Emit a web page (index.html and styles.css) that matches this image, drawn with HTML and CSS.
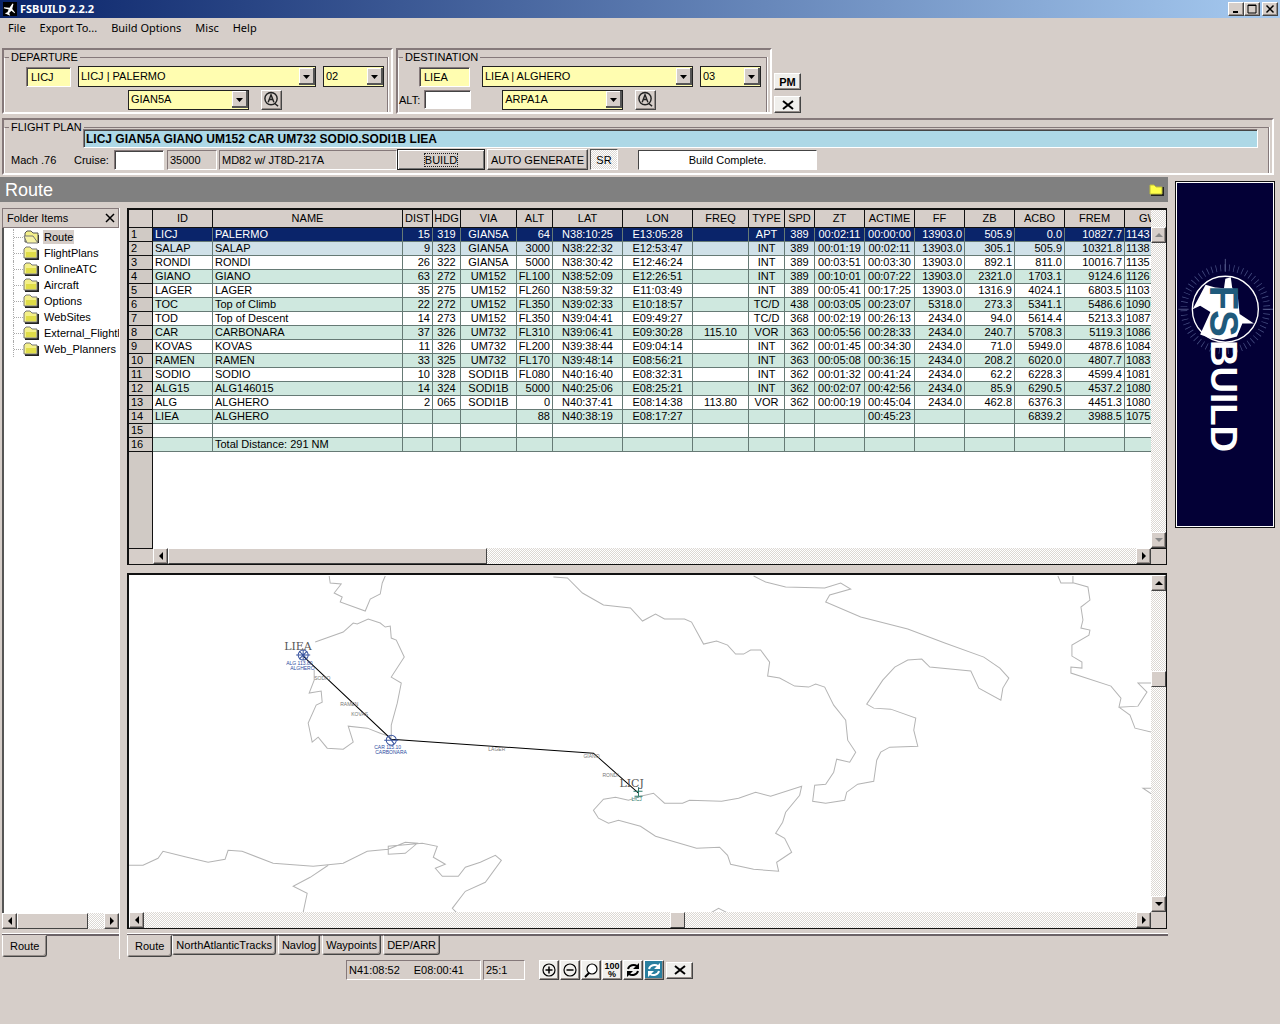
FILE: index.html
```
<!DOCTYPE html>
<html lang="en">
<head>
  <meta charset="UTF-8">
  <meta name="viewport" content="width=device-width, initial-scale=1.0">
  <title>FSBUILD 2.2.2</title>
  <link rel="stylesheet" href="styles.css">
</head>
<body>
  <!-- Window caption -->
  <header class="caption">
    <svg class="caption-icon" viewBox="0 0 14 14" aria-hidden="true">
      <rect width="14" height="14" fill="#000"/>
      <path d="M1 8l5-2 1-5 1 0 1 5 4 2v1l-4-1-1 3 2 2H4l2-2V8l-5 1z" fill="#fff" transform="rotate(25 7 7)"/>
    </svg>
    <h1>FSBUILD 2.2.2</h1>
    <div class="caption-buttons">
      <button aria-label="Minimize"><svg viewBox="0 0 12 10"><path d="M3 8h5" stroke="#000" stroke-width="2"/></svg></button>
      <button aria-label="Maximize"><svg viewBox="0 0 12 10"><path d="M2 1h8v8H2z" fill="none" stroke="#000"/><path d="M2 1.500h8" stroke="#000"/></svg></button>
      <button class="close" aria-label="Close"><svg viewBox="0 0 12 10"><path d="M2.500 1.500l7 7m0-7l-7 7" stroke="#000" stroke-width="1.500"/></svg></button>
    </div>
  </header>

  <nav class="menu">
    <button>File</button>
    <button>Export To...</button>
    <button>Build Options</button>
    <button>Misc</button>
    <button>Help</button>
  </nav>

  <!-- Airports -->
  <section class="airports">
    <div class="group departure">
      <fieldset>
        <legend>DEPARTURE</legend>
        <div class="line">
          <input class="icao" type="text" value="LICJ" aria-label="Departure ICAO">
          <select class="airport" aria-label="Departure airport"><option>LICJ | PALERMO</option></select>
          <select class="runway" aria-label="Departure runway"><option>02</option></select>
        </div>
        <div class="line second">
          <select class="procedure" aria-label="SID"><option>GIAN5A</option></select>
          <button class="lookup" aria-label="Find departure">
            <svg viewBox="0 0 18 18"><circle cx="8.500" cy="8" r="6.500" fill="none" stroke="#222" stroke-width="1.500"/><path d="M5.500 12l3-8 3 8M7 9h3M12 13l4 3" fill="none" stroke="#222" stroke-width="1.500"/></svg>
          </button>
        </div>
      </fieldset>
    </div>

    <div class="group destination">
      <fieldset>
        <legend>DESTINATION</legend>
        <div class="line">
          <input class="icao" type="text" value="LIEA" aria-label="Destination ICAO">
          <select class="airport" aria-label="Destination airport"><option>LIEA | ALGHERO</option></select>
          <select class="runway" aria-label="Destination runway"><option>03</option></select>
        </div>
        <div class="line second">
          <label for="alternate">ALT:</label>
          <input class="alternate" type="text" id="alternate">
          <select class="procedure" aria-label="STAR"><option>ARPA1A</option></select>
          <button class="lookup" aria-label="Find destination">
            <svg viewBox="0 0 18 18"><circle cx="8.500" cy="8" r="6.500" fill="none" stroke="#222" stroke-width="1.500"/><path d="M5.500 12l3-8 3 8M7 9h3M12 13l4 3" fill="none" stroke="#222" stroke-width="1.500"/></svg>
          </button>
        </div>
      </fieldset>
    </div>

    <div class="side-buttons">
      <button class="small-button">PM</button>
      <button class="small-button" aria-label="Clear airports"><svg viewBox="0 0 14 10"><path d="M2 1l10 8m0-8L2 9" stroke="#000" stroke-width="2"/></svg></button>
    </div>
  </section>

  <!-- Flight plan -->
  <section class="group plan">
    <fieldset>
      <legend>FLIGHT PLAN</legend>
      <input class="route-text" type="text" value="LICJ GIAN5A GIANO UM152 CAR UM732 SODIO.SODI1B LIEA" aria-label="Route">
      <div class="plan-line">
        <span class="mach">Mach .76</span>
        <label for="cruise">Cruise:</label>
        <input class="cruise" type="text" id="cruise">
        <output class="sunken level">35000</output>
        <output class="sunken aircraft">MD82 w/ JT8D-217A</output>
        <button class="build"><span>BUILD</span></button>
        <button class="generate">AUTO GENERATE</button>
        <button class="sr" aria-pressed="true">SR</button>
        <output class="status">Build Complete.</output>
      </div>
    </fieldset>
  </section>

  <main>
    <div class="workspace">
      <div class="section-title">
        <h2>Route</h2>
        <button class="folder-button" aria-label="Open folder"><svg viewBox="0 0 16 13"><path d="M3 12h12V4" fill="none" stroke="#222" stroke-width="2"/><path d="M2 2h4l2 2h6v7H2z" fill="#ffff4a" stroke="#bdbd3a"/></svg></button>
      </div>

      <div class="panes">
        <!-- Folder tree -->
        <aside class="folders">
          <div class="folders-head">
            <span>Folder Items</span>
            <button aria-label="Close folders"><svg viewBox="0 0 10 10"><path d="M1 1l8 8m0-8L1 9" stroke="#000" stroke-width="1.500"/></svg></button>
          </div>
          <svg width="0" height="0" class="defs" aria-hidden="true">
            <symbol id="folder" viewBox="0 0 16 14">
              <path d="M15 4v9H2" fill="none" stroke="#222" stroke-width="2"/>
              <path d="M1 12V3l2-2h4l2 2h5v9z" fill="#f4f08a" stroke="#777"/>
              <path d="M3 6h10v5H3z" fill="#e0dd48"/>
            </symbol>
            <symbol id="folder-open" viewBox="0 0 16 14">
              <path d="M15 5v8" stroke="#222" stroke-width="2"/>
              <path d="M2 12V3l2-2h4l2 2h5v9z" fill="#f4f08a" stroke="#555"/>
              <path d="M1 6h9l5 7H4z" fill="#f6f3a4" stroke="#777"/>
            </symbol>
          </svg>
          <ul class="tree">
            <li class="selected"><svg><use href="#folder-open"/></svg><a href="#">Route</a></li>
            <li><svg><use href="#folder"/></svg><a href="#">FlightPlans</a></li>
            <li><svg><use href="#folder"/></svg><a href="#">OnlineATC</a></li>
            <li><svg><use href="#folder"/></svg><a href="#">Aircraft</a></li>
            <li><svg><use href="#folder"/></svg><a href="#">Options</a></li>
            <li><svg><use href="#folder"/></svg><a href="#">WebSites</a></li>
            <li><svg><use href="#folder"/></svg><a href="#">External_FlightP</a></li>
            <li><svg><use href="#folder"/></svg><a href="#">Web_Planners</a></li>
          </ul>
          <div class="scroll-x">
            <button aria-label="Scroll left" class="left"></button>
            <div class="track"><div class="thumb wide"></div></div>
            <button aria-label="Scroll right" class="right"></button>
          </div>
          <div class="tabs folder-tabs"><button class="active">Route</button></div>
        </aside>

        <div class="content">
          <!-- Route table -->
          <div class="grid-frame">
            <div class="grid-main">
              <div class="grid-view">
                <table>
                  <colgroup>
                    <col class="w24"><col class="w60"><col class="w190"><col class="w30"><col class="w28"><col class="w56">
                    <col class="w36"><col class="w70"><col class="w70"><col class="w56"><col class="w36"><col class="w30">
                    <col class="w50"><col class="w50"><col class="w50"><col class="w50"><col class="w50"><col class="w60"><col class="w60">
                  </colgroup>
                  <thead>
                    <tr><th></th><th>ID</th><th>NAME</th><th>DIST</th><th>HDG</th><th>VIA</th><th>ALT</th><th>LAT</th><th>LON</th><th>FREQ</th><th>TYPE</th><th>SPD</th><th>ZT</th><th>ACTIME</th><th>FF</th><th>ZB</th><th>ACBO</th><th>FREM</th><th class="weight">GW</th></tr>
                  </thead>
                  <tbody>
                    <tr class="current"><th>1</th><td>LICJ</td><td>PALERMO</td><td>15</td><td>319</td><td>GIAN5A</td><td>64</td><td>N38:10:25</td><td>E13:05:28</td><td></td><td>APT</td><td>389</td><td>00:02:11</td><td>00:00:00</td><td>13903.0</td><td>505.9</td><td>0.0</td><td>10827.7</td><td>1143</td></tr>
                    <tr class="next"><th>2</th><td>SALAP</td><td>SALAP</td><td>9</td><td>323</td><td>GIAN5A</td><td>3000</td><td>N38:22:32</td><td>E12:53:47</td><td></td><td>INT</td><td>389</td><td>00:01:19</td><td>00:02:11</td><td>13903.0</td><td>305.1</td><td>505.9</td><td>10321.8</td><td>1138</td></tr>
                    <tr><th>3</th><td>RONDI</td><td>RONDI</td><td>26</td><td>322</td><td>GIAN5A</td><td>5000</td><td>N38:30:42</td><td>E12:46:24</td><td></td><td>INT</td><td>389</td><td>00:03:51</td><td>00:03:30</td><td>13903.0</td><td>892.1</td><td>811.0</td><td>10016.7</td><td>1135</td></tr>
                    <tr><th>4</th><td>GIANO</td><td>GIANO</td><td>63</td><td>272</td><td>UM152</td><td>FL100</td><td>N38:52:09</td><td>E12:26:51</td><td></td><td>INT</td><td>389</td><td>00:10:01</td><td>00:07:22</td><td>13903.0</td><td>2321.0</td><td>1703.1</td><td>9124.6</td><td>1126</td></tr>
                    <tr><th>5</th><td>LAGER</td><td>LAGER</td><td>35</td><td>275</td><td>UM152</td><td>FL260</td><td>N38:59:32</td><td>E11:03:49</td><td></td><td>INT</td><td>389</td><td>00:05:41</td><td>00:17:25</td><td>13903.0</td><td>1316.9</td><td>4024.1</td><td>6803.5</td><td>1103</td></tr>
                    <tr><th>6</th><td>TOC</td><td>Top of Climb</td><td>22</td><td>272</td><td>UM152</td><td>FL350</td><td>N39:02:33</td><td>E10:18:57</td><td></td><td>TC/D</td><td>438</td><td>00:03:05</td><td>00:23:07</td><td>5318.0</td><td>273.3</td><td>5341.1</td><td>5486.6</td><td>1090</td></tr>
                    <tr><th>7</th><td>TOD</td><td>Top of Descent</td><td>14</td><td>273</td><td>UM152</td><td>FL350</td><td>N39:04:41</td><td>E09:49:27</td><td></td><td>TC/D</td><td>368</td><td>00:02:19</td><td>00:26:13</td><td>2434.0</td><td>94.0</td><td>5614.4</td><td>5213.3</td><td>1087</td></tr>
                    <tr><th>8</th><td>CAR</td><td>CARBONARA</td><td>37</td><td>326</td><td>UM732</td><td>FL310</td><td>N39:06:41</td><td>E09:30:28</td><td>115.10</td><td>VOR</td><td>363</td><td>00:05:56</td><td>00:28:33</td><td>2434.0</td><td>240.7</td><td>5708.3</td><td>5119.3</td><td>1086</td></tr>
                    <tr><th>9</th><td>KOVAS</td><td>KOVAS</td><td>11</td><td>326</td><td>UM732</td><td>FL200</td><td>N39:38:44</td><td>E09:04:14</td><td></td><td>INT</td><td>362</td><td>00:01:45</td><td>00:34:30</td><td>2434.0</td><td>71.0</td><td>5949.0</td><td>4878.6</td><td>1084</td></tr>
                    <tr><th>10</th><td>RAMEN</td><td>RAMEN</td><td>33</td><td>325</td><td>UM732</td><td>FL170</td><td>N39:48:14</td><td>E08:56:21</td><td></td><td>INT</td><td>363</td><td>00:05:08</td><td>00:36:15</td><td>2434.0</td><td>208.2</td><td>6020.0</td><td>4807.7</td><td>1083</td></tr>
                    <tr><th>11</th><td>SODIO</td><td>SODIO</td><td>10</td><td>328</td><td>SODI1B</td><td>FL080</td><td>N40:16:40</td><td>E08:32:31</td><td></td><td>INT</td><td>362</td><td>00:01:32</td><td>00:41:24</td><td>2434.0</td><td>62.2</td><td>6228.3</td><td>4599.4</td><td>1081</td></tr>
                    <tr><th>12</th><td>ALG15</td><td>ALG146015</td><td>14</td><td>324</td><td>SODI1B</td><td>5000</td><td>N40:25:06</td><td>E08:25:21</td><td></td><td>INT</td><td>362</td><td>00:02:07</td><td>00:42:56</td><td>2434.0</td><td>85.9</td><td>6290.5</td><td>4537.2</td><td>1080</td></tr>
                    <tr><th>13</th><td>ALG</td><td>ALGHERO</td><td>2</td><td>065</td><td>SODI1B</td><td>0</td><td>N40:37:41</td><td>E08:14:38</td><td>113.80</td><td>VOR</td><td>362</td><td>00:00:19</td><td>00:45:04</td><td>2434.0</td><td>462.8</td><td>6376.3</td><td>4451.3</td><td>1080</td></tr>
                    <tr><th>14</th><td>LIEA</td><td>ALGHERO</td><td></td><td></td><td></td><td>88</td><td>N40:38:19</td><td>E08:17:27</td><td></td><td></td><td></td><td></td><td>00:45:23</td><td></td><td></td><td>6839.2</td><td>3988.5</td><td>1075</td></tr>
                    <tr><th>15</th><td></td><td></td><td></td><td></td><td></td><td></td><td></td><td></td><td></td><td></td><td></td><td></td><td></td><td></td><td></td><td></td><td></td><td></td></tr>
                    <tr><th>16</th><td></td><td>Total Distance: 291 NM</td><td></td><td></td><td></td><td></td><td></td><td></td><td></td><td></td><td></td><td></td><td></td><td></td><td></td><td></td><td></td><td></td></tr>
                  </tbody>
                </table>
              </div>
              <div class="scroll-y disabled">
                <button aria-label="Scroll up" class="up" disabled></button>
                <div class="track"></div>
                <button aria-label="Scroll down" class="down" disabled></button>
              </div>
            </div>
            <div class="scroll-row grid-scroll">
              <div class="scroll-x">
                <button aria-label="Scroll left" class="left"></button>
                <div class="track"><div class="thumb third"></div></div>
                <button aria-label="Scroll right" class="right"></button>
              </div>
            </div>
          </div>

          <!-- Map -->
          <div class="map-frame">
            <div class="map-main">
              <svg class="map" viewBox="129 575 1021 337" preserveAspectRatio="xMinYMin slice" role="img" aria-label="Route map">
                <g class="coast">
                  <path d="M329 576l1 7 11 1-7 9 8 4-2 5 25 9 5-12 10-5 2-11 3-7"/>
                  <path d="M315 642L343 632 353 623 357 624 368 619 380 623 385 627 390 626 391 638 396 640 404 657 391 677 401 683 397 703 391 725 391 737 380 733 367 728 348 726 353 742 343 749 327 748 318 737 312 742 308 723 316 705 322 702 321 691 309 693 314 680 314 670"/>
                  <path d="M553 577L567 578 582 593 603 605 630 608 642 621 655 614 664 619 684 619 691 622 703 644 716 641 727 645 735 654 743 654 750 650 760 650 769 662 767 676 779 678 794 686 808 687 815 684 824 687 833 705 845 720 847 740 855 752 849 762 836 759 833 772 825 784 814 785 812 801 825 803 844 800 846 792 857 784 873 781 876 760 880 752 889 747 917 746 913 730 915 718 890 709 873 708 866 704 882 680 894 667 907 660 921 659 929 667 970 671 978 688 1000 700 1002 688 1008 678 999 668 983 657 944 643 907 629 860 617 825 602 829 595 850 589 840 583 824 588 785 587 765 582 753 576"/>
                  <path d="M603 799L615 797 628 800 640 796 653 793 664 803 682 803 689 800 721 801 738 798 755 792 770 796 801 786 799 795 785 812 782 822 775 833 784 838 791 852 776 862 778 871 753 869 730 864 727 855 719 847 696 848 655 836 640 826 618 820 608 823 598 818 593 810z"/>
                  <path d="M1057 576L1060 583 1073 583 1087 587 1089 600 1080 607 1082 620 1080 628 1089 630 1088 635 1071 645 1071 656 1081 662 1081 668 1070 667 1070 673 1110 686 1120 698 1118 707 1137 706 1146 692 1137 683 1151 683M1118 707L1129 715 1134 728 1151 732M1072 576v7M1151 788h-9l9 6"/>
                  <path d="M129 865L143 865 158 858 163 851 187 857 208 862 225 859 228 850 242 851 273 863 313 866 343 863 367 851 388 849 405 842 417 843 405 853 388 854 388 846 422 843 437 846 433 857 445 864 435 868 442 876 458 876 465 867 480 862 495 855 501 860 485 882 465 891 452 908 456 912"/>
                  <path d="M328 865L310 877 293 886 307 893 303 912M711 912l7-4 8 4"/>
                </g>
                <path class="course" d="M303 656L391 739 593 753 638 793"/>
                <g class="beacon">
                  <circle cx="303" cy="655" r="5"/><path d="M296 655h14M303 650v10M299 651l8 8M299 659l8-8"/>
                  <circle cx="391" cy="740" r="5"/><path d="M384 740h14M388 736l6 8"/>
                </g>
                <path class="arrival" d="M633 791h9M638 787v9M634 796h8"/>
                <g class="airport-name">
                  <text x="284" y="650">LIEA</text>
                  <text x="619" y="787">LICJ</text>
                </g>
                <g class="beacon-name">
                  <text x="286" y="665">ALG 113.80</text><text x="290" y="670">ALGHERO</text>
                  <text x="374" y="749">CAR 115.10</text><text x="375" y="754">CARBONARA</text>
                </g>
                <text class="arrival-name" x="631" y="801">LICJ</text>
                <g class="fix-name">
                  <text x="314" y="680">SODIO</text><text x="340" y="706">RAMEN</text><text x="351" y="716">KOVAS</text>
                  <text x="488" y="751">LAGER</text><text x="583" y="758">GIANO</text><text x="602" y="777">RONDI</text>
                </g>
              </svg>
              <div class="scroll-y">
                <button aria-label="Scroll up" class="up"></button>
                <div class="track"><div class="thumb"></div></div>
                <button aria-label="Scroll down" class="down"></button>
              </div>
            </div>
            <div class="scroll-row">
              <div class="scroll-x map-scroll">
                <button aria-label="Scroll left" class="left"></button>
                <div class="track"><div class="thumb"></div></div>
                <button aria-label="Scroll right" class="right"></button>
              </div>
            </div>
          </div>

          <div class="tabs">
            <button class="active">Route</button>
            <button>NorthAtlanticTracks</button>
            <button>Navlog</button>
            <button>Waypoints</button>
            <button>DEP/ARR</button>
          </div>
        </div>
      </div>

      <!-- Map toolbar -->
      <div class="toolbar">
        <output class="sunken position"><span>N41:08:52</span><span>E08:00:41</span></output>
        <output class="sunken scale">25:1</output>
        <div class="tools">
          <button aria-label="Zoom in"><svg viewBox="0 0 16 16"><circle cx="8" cy="8" r="6" fill="none" stroke="#000" stroke-width="1.200"/><path d="M4.500 8h7M8 4.500v7" stroke="#000" stroke-width="1.500"/></svg></button>
          <button aria-label="Zoom out"><svg viewBox="0 0 16 16"><circle cx="8" cy="8" r="6" fill="none" stroke="#000" stroke-width="1.200"/><path d="M4.500 8h7" stroke="#000" stroke-width="1.500"/></svg></button>
          <button aria-label="Zoom window"><svg viewBox="0 0 16 16"><circle cx="9" cy="7" r="5" fill="#fff" stroke="#000" stroke-width="1.200"/><path d="M6 11l-4 4" stroke="#000" stroke-width="2"/></svg></button>
          <button class="percent"><span>100</span><span>%</span></button>
          <button aria-label="Refresh"><svg viewBox="0 0 16 16"><path d="M3 7c1-4 6-5 9-3M13 9c-1 4-6 5-9 3" fill="none" stroke="#000" stroke-width="2"/><path d="M14 1v6H8zM2 15V9h6z"/></svg></button>
          <button class="on" aria-label="Auto refresh" aria-pressed="true"><svg viewBox="0 0 16 16"><path d="M3 7c1-4 6-5 9-3M13 9c-1 4-6 5-9 3" fill="none" stroke="#fff" stroke-width="2"/><path d="M14 1v6H8zM2 15V9h6z" fill="#fff"/></svg></button>
        </div>
        <button class="small-button" aria-label="Clear map"><svg viewBox="0 0 14 10"><path d="M2 1l10 8m0-8L2 9" stroke="#000" stroke-width="2"/></svg></button>
      </div>
    </div>

    <!-- Logo banner -->
    <div class="banner">
      <svg viewBox="35 38 288 1014" role="img" aria-label="FSBUILD">
        <circle cx="180" cy="412" r="122" fill="none" stroke="#4a5286" stroke-width="20" stroke-dasharray="2 11"/>
        <path d="M180 264v38M42 412h30M290 412h30" stroke="#7079a8" stroke-width="2"/>
        <circle cx="180" cy="412" r="97" fill="#030036" stroke="#fff" stroke-width="4"/>
        <path d="M84 412L122 340l28 8 26 2 4-28 16-4 4 30 16 20 6 58 42 28-34 0-16 38-40 10-42-6-26-10 30-66-30-18z" fill="#fff"/>
        <text class="logo-fs" transform="translate(136 342) rotate(90)">FS</text>
        <text class="logo-build" transform="translate(138 502) rotate(90)">BUILD</text>
      </svg>
    </div>
  </main>
</body>
</html>
```

FILE: styles.css
```
/* Reset & Base */
* {
  box-sizing: border-box;
  margin: 0;
  padding: 0;
}

:root {
  --face: #d6cec9;
  --shadow: #85797a;
  --cream: #fffdb0;
  --dither: repeating-conic-gradient(#fff 0 25%, #dcd8d3 0 50%) 0 0 / 2px 2px;
}

body {
  display: flex;
  flex-direction: column;
  min-height: 100vh;
  background: var(--face);
  color: #000;
  font-family: "Liberation Sans", Arial, sans-serif;
  font-size: 11px;
  line-height: 14px;
}

button,
input,
select {
  font: inherit;
  color: inherit;
  border-radius: 0;
}

button {
  display: flex;
  align-items: center;
  justify-content: center;
  background: var(--face);
  border: 1px solid;
  border-color: #fff #444 #444 #fff;
  box-shadow: inset -1px -1px #948c88;
  white-space: nowrap;
}

input {
  border: 1px solid;
  border-color: var(--shadow) #fff #fff var(--shadow);
  box-shadow: inset 1px 1px #444;
  padding: 0 4px;
}

/* Caption & Menu */
.caption {
  display: flex;
  align-items: center;
  height: 18px;
  padding: 0 2px 0 3px;
  background: linear-gradient(to right, #0a246a, #a6caf0);
  color: #fff;
}

.caption-icon {
  width: 14px;
  height: 14px;
  margin-right: 3px;
}

.caption h1 {
  flex: 1;
  font: bold 11px/14px "Noto Sans", sans-serif;
}

.caption-buttons {
  display: flex;
}

.caption-buttons button {
  width: 16px;
  height: 14px;
}

.caption-buttons svg {
  width: 12px;
  height: 10px;
}

.caption-buttons .close {
  margin-left: 2px;
}

.menu {
  display: flex;
  gap: 14px;
  height: 30px;
  padding: 3px 8px 0;
}

.menu button {
  height: 14px;
  border: none;
  box-shadow: none;
  font-family: "Noto Sans", sans-serif;
}

/* Group boxes */
.group {
  border: 2px solid;
  border-color: var(--shadow) #fff #fff var(--shadow);
  padding-right: 3px;
}

fieldset {
  height: 100%;
  min-width: 0;
  border: 1px solid var(--shadow);
  border-left-color: #fff;
  border-bottom: none;
  box-shadow: 1px 0 #fff;
}

legend {
  height: 14px;
  margin-left: 4px;
  padding: 0 2px;
}

.airports {
  display: flex;
  padding: 0 2px;
}

.airports .group {
  height: 66px;
}

.departure {
  width: 391px;
  margin-right: 3px;
}

.destination {
  width: 376px;
}

.line {
  display: flex;
  align-items: center;
  height: 21px;
  margin-top: 2px;
}

.line input,
.line select {
  background-color: var(--cream);
}

.icao {
  height: 20px;
}

select {
  height: 21px;
  padding: 0 18px 2px 2px;
  appearance: none;
  border: 1px solid #222;
  background-image: url("data:image/svg+xml,%3Csvg xmlns='http://www.w3.org/2000/svg' width='16' height='17'%3E%3Cpath d='M0 0h16v17H0z' fill='%23d6cec9'/%3E%3Cpath d='M0 17V0h16' stroke='%23fff' stroke-width='2' fill='none'/%3E%3Cpath d='M15 0v16H0' stroke='%23555' stroke-width='2' fill='none'/%3E%3Cpath d='M4 7h7l-3.500 4z'/%3E%3C/svg%3E");
  background-repeat: no-repeat;
  background-position: right center;
}

.departure .icao {
  width: 45px;
  margin: 0 7px 0 21px;
}

.departure .airport {
  width: 238px;
}

.runway {
  width: 61px;
  margin-left: 7px;
}

.destination .icao {
  width: 51px;
  margin: 0 12px 0 20px;
}

.destination .airport {
  width: 211px;
}

.second .procedure {
  width: 121px;
  height: 20px;
}

.departure .procedure {
  margin-left: 123px;
}

.line .alternate {
  width: 47px;
  height: 19px;
  margin: 0 31px 0 4px;
  background-color: #fff;
}

.lookup {
  width: 21px;
  height: 20px;
  margin-left: 12px;
}

.lookup svg {
  width: 17px;
  height: 17px;
}

.side-buttons {
  display: flex;
  flex-direction: column;
  gap: 6px;
  padding: 25px 0 0 2px;
}

.small-button {
  width: 27px;
  height: 17px;
  background: #f0efec;
  font-weight: bold;
}

.small-button svg {
  width: 14px;
  height: 10px;
}

/* Flight plan */
.plan {
  height: 57px;
  margin: 4px 6px 0 2px;
}

.route-text {
  display: block;
  width: calc(100% - 88px);
  height: 19px;
  margin: -5px 0 0 78px;
  padding: 0 2px;
  background: #add8e6;
  font-weight: bold;
  font-size: 12px;
}

.plan-line {
  display: flex;
  align-items: center;
  height: 21px;
  margin-top: 1px;
  padding-left: 6px;
}

.mach {
  width: 63px;
}

.plan-line label {
  width: 40px;
}

.cruise {
  width: 50px;
  height: 20px;
}

.sunken {
  height: 20px;
  padding: 2px;
  border: 1px solid;
  border-color: var(--shadow) #fff #fff var(--shadow);
}

.level {
  width: 50px;
  margin: 0 2px 0 3px;
}

.aircraft {
  width: 178px;
}

.plan-line button {
  height: 21px;
}

.build {
  width: 88px;
  border: 1px solid #222;
  box-shadow: inset 1px 1px #fff, inset -1px -1px #777;
}

.build span {
  border: 1px dotted #222;
  line-height: 12px;
}

.plan-line .generate {
  width: 101px;
  margin: 0 2px;
}

.plan-line .sr {
  width: 28px;
  background: var(--dither);
  border-color: #555 #fff #fff #555;
  box-shadow: none;
}

.status {
  width: 179px;
  height: 20px;
  margin-left: 20px;
  padding-top: 2px;
  background: #fff;
  border: 1px solid;
  border-color: #444 #fff #fff #444;
  text-align: center;
}

/* Workspace */
main {
  flex: 1;
  display: flex;
  margin-top: 2px;
}

.workspace {
  flex: 1;
  display: flex;
  flex-direction: column;
  min-width: 0;
  padding-bottom: 43px;
}

.section-title {
  display: flex;
  align-items: center;
  justify-content: space-between;
  height: 25px;
  padding: 0 4px 0 5px;
  background: #808080;
  color: #fff;
}

.section-title h2 {
  font-size: 18px;
  font-weight: normal;
}

.folder-button {
  background: none;
  border: none;
  box-shadow: none;
}

.folder-button svg {
  width: 16px;
  height: 13px;
}

.panes {
  flex: 1;
  display: flex;
  gap: 7px;
  padding-top: 6px;
}

/* Folder tree */
.folders {
  display: flex;
  flex-direction: column;
  width: 120px;
  padding-left: 2px;
  border-right: 1px solid #fff;
}

.folders-head {
  display: flex;
  align-items: center;
  justify-content: space-between;
  height: 20px;
  padding: 0 3px 0 4px;
  border: 1px solid var(--shadow);
}

.folders-head button {
  border: none;
  box-shadow: none;
}

.folders-head svg {
  width: 10px;
  height: 10px;
}

.defs {
  position: absolute;
}

.tree {
  flex: 1;
  padding: 1px 0 0 9px;
  background: #fff;
  border-left: 2px solid #555;
  list-style: none;
  overflow: hidden;
}

.tree li {
  display: flex;
  align-items: center;
  height: 16px;
  border-left: 1px dotted #aaa;
}

.tree li::before {
  content: '';
  width: 9px;
  flex: none;
  border-top: 1px dotted #aaa;
}

.tree svg {
  flex: none;
  width: 16px;
  height: 14px;
  margin-right: 4px;
}

.tree a {
  padding: 0 1px;
  color: #000;
  text-decoration: none;
  overflow: hidden;
}

.tree .selected a {
  background: var(--face);
}

/* Scroll bars */
.scroll-x,
.scroll-y {
  display: flex;
  background: var(--dither);
}

.scroll-x {
  height: 16px;
}

.scroll-y {
  flex-direction: column;
  width: 15px;
}

.scroll-x button,
.scroll-y button {
  flex: none;
  width: 15px;
  height: 16px;
}

.track {
  display: flex;
  flex: 1;
}

.scroll-y .track {
  flex-direction: column;
}

.thumb {
  width: 15px;
  height: 16px;
  background: var(--face);
  border: 1px solid;
  border-color: #fff #444 #444 #fff;
}

.thumb.wide {
  width: 82%;
}

.thumb.third {
  width: 33%;
}

.map-scroll .thumb {
  margin-left: 53%;
}

.scroll-y .thumb {
  margin-top: 80px;
}

.left::before,
.right::before,
.up::before,
.down::before {
  content: '';
  border: 4px solid transparent;
}

.left::before {
  border-right-color: #000;
  border-left: none;
}

.right::before {
  border-left-color: #000;
  border-right: none;
}

.up::before {
  border-bottom-color: #000;
  border-top: none;
}

.down::before {
  border-top-color: #000;
  border-bottom: none;
}

.disabled .up::before {
  border-bottom-color: #888;
}

.disabled .down::before {
  border-top-color: #888;
}

.disabled {
  padding-top: 17px;
}

.scroll-row {
  padding-right: 15px;
  background: var(--face);
}

/* Route table */
.content {
  flex: 1;
  display: flex;
  flex-direction: column;
  min-width: 0;
}

.grid-frame,
.map-frame {
  display: flex;
  flex-direction: column;
  margin-right: 1px;
  border: 2px solid #111;
  border-right-width: 1px;
  border-bottom-width: 1px;
}

.grid-frame {
  height: 357px;
  margin-bottom: 8px;
}

.grid-main,
.map-main {
  flex: 1;
  display: flex;
  min-height: 0;
}

.grid-view {
  flex: 1;
  min-width: 0;
  overflow: hidden;
  background: linear-gradient(to right, #d0cac5 23px, #111 23px, #111 24px, #fff 24px);
}

.grid-scroll {
  padding-left: 24px;
  background: linear-gradient(#111 1px, var(--face) 1px);
}

table {
  width: 1056px;
  table-layout: fixed;
  border-collapse: separate;
  border-spacing: 0;
}

.w24 { width: 24px; }
.w28 { width: 28px; }
.w30 { width: 30px; }
.w36 { width: 36px; }
.w50 { width: 50px; }
.w56 { width: 56px; }
.w60 { width: 60px; }
.w70 { width: 70px; }
.w190 { width: 190px; }

th,
td {
  height: 14px;
  border-right: 1px solid #667a75;
  border-bottom: 1px solid #667a75;
  font-weight: normal;
  line-height: 13px;
  text-align: center;
  white-space: nowrap;
}

th {
  background: var(--face);
  border-color: #111;
}

thead th {
  height: 18px;
}

.weight {
  padding-left: 14px;
  text-align: left;
}

tbody th {
  padding-left: 2px;
  background: #d0cac5;
  text-align: left;
}

tbody tr {
  background: #fff;
}

tbody tr:nth-child(even) {
  background: #cfe8df;
}

tbody .current {
  background: #0a246a;
  color: #fff;
}

tbody .current th {
  color: #000;
}

tbody .next:nth-child(even) {
  background: #d0e1e8;
}

td:nth-child(2),
td:nth-child(3) {
  padding-left: 2px;
  text-align: left;
}

td:nth-child(4),
td:nth-child(7),
td:nth-child(n+15) {
  padding-right: 2px;
  text-align: right;
}

td:nth-child(19) {
  padding-left: 1px;
  text-align: left;
}

/* Map */
.map-frame {
  flex: 1;
  min-height: 300px;
  background: #fff;
}

.map {
  flex: 1;
  min-width: 0;
  height: 100%;
}

.coast path {
  fill: none;
  stroke: #b4b4b4;
}

.course {
  fill: none;
  stroke: #000;
}

.beacon {
  fill: none;
  stroke: #3a55a0;
}

.arrival {
  stroke: #2b7a6a;
}

.airport-name {
  fill: #555;
  font: 11px "DejaVu Serif", serif;
}

.beacon-name {
  fill: #2b4ba0;
  font-size: 5px;
}

.arrival-name {
  fill: #2b7a6a;
  font-size: 5px;
}

.fix-name {
  fill: #777;
  font-size: 5px;
}

/* Tabs */
.tabs {
  display: flex;
  gap: 2px;
  height: 26px;
  margin-top: 4px;
  border-top: 1px solid #fff;
  box-shadow: inset 0 2px #6b6266;
}

.tabs button {
  height: 20px;
  margin-top: 1px;
  padding: 0 3px;
  border: 1px solid;
  border-color: #555 #444 #444 #fff;
  border-radius: 0 0 3px 3px;
}

.tabs .active {
  height: 22px;
  padding: 0 7px;
  margin-right: -2px;
  border-top-color: var(--face);
}

/* Map toolbar */
.toolbar {
  display: flex;
  align-items: center;
  height: 22px;
  padding-left: 346px;
}

.position {
  display: flex;
  gap: 14px;
  width: 135px;
}

.scale {
  width: 42px;
  margin: 0 14px 0 2px;
}

.tools {
  display: flex;
  gap: 1px;
}

.tools button {
  width: 20px;
  height: 20px;
  background: #f0efec;
}

.tools svg {
  width: 16px;
  height: 16px;
}

.tools .percent {
  flex-direction: column;
  font-size: 9px;
  font-weight: bold;
  line-height: 8px;
}

.tools .on {
  background: #2a7f9f;
}

.toolbar .small-button {
  margin-left: 2px;
}

/* Logo banner */
.banner {
  width: 112px;
  padding: 4px 5px 0 7px;
}

.banner svg {
  display: block;
  width: 100%;
  background: #030036;
  border: 1px solid #111;
  outline: 1px solid #fff;
  outline-offset: -2px;
}

.logo-fs {
  fill: #1f5a7c;
  font-size: 118px;
  font-weight: bold;
}

.logo-build {
  fill: #fff;
  font-size: 108px;
  font-weight: bold;
}
```
